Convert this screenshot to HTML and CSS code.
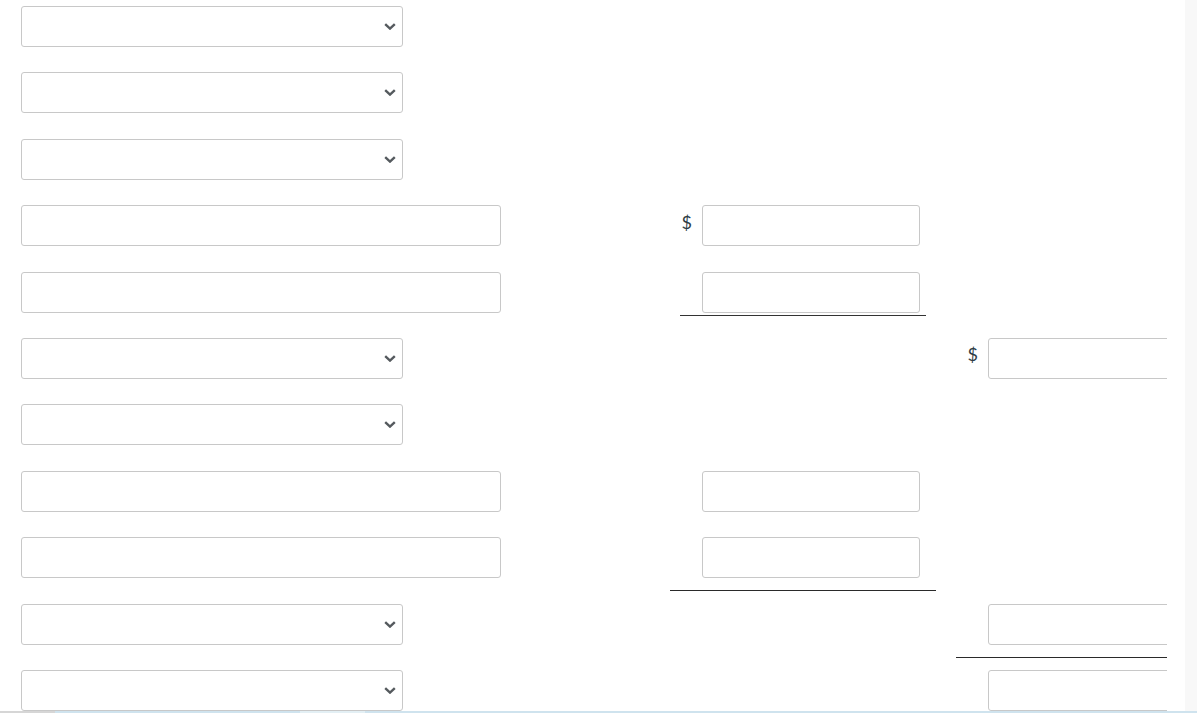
FILE: index.html
```html
<!DOCTYPE html>
<html lang="en">
<head>
<meta charset="utf-8">
<title>Worksheet</title>
<link rel="stylesheet" href="styles.css">
</head>
<body>
<main class="sheet">
  <div class="row">
    <label class="select"><select></select><svg class="chev" viewBox="0 0 12 7" width="12" height="7"><polyline points="1.2,1.2 6,5.6 10.8,1.2"/></svg></label>
  </div>
  <div class="row">
    <label class="select"><select></select><svg class="chev" viewBox="0 0 12 7" width="12" height="7"><polyline points="1.2,1.2 6,5.6 10.8,1.2"/></svg></label>
  </div>
  <div class="row">
    <label class="select"><select></select><svg class="chev" viewBox="0 0 12 7" width="12" height="7"><polyline points="1.2,1.2 6,5.6 10.8,1.2"/></svg></label>
  </div>
  <div class="row">
    <input class="text wide" type="text">
    <div class="cell-b"><span class="cur">$</span><input class="text amt" type="text"></div>
  </div>
  <div class="row">
    <input class="text wide" type="text">
    <div class="cell-b sub"><input class="text amt" type="text"></div>
  </div>
  <div class="row">
    <label class="select"><select></select><svg class="chev" viewBox="0 0 12 7" width="12" height="7"><polyline points="1.2,1.2 6,5.6 10.8,1.2"/></svg></label>
    <div class="cell-b"></div>
    <div class="cell-c"><span class="cur">$</span><input class="text amt" type="text"></div>
  </div>
  <div class="row">
    <label class="select"><select></select><svg class="chev" viewBox="0 0 12 7" width="12" height="7"><polyline points="1.2,1.2 6,5.6 10.8,1.2"/></svg></label>
  </div>
  <div class="row">
    <input class="text wide" type="text">
    <div class="cell-b"><input class="text amt" type="text"></div>
  </div>
  <div class="row">
    <input class="text wide" type="text">
    <div class="cell-b total"><input class="text amt" type="text"></div>
  </div>
  <div class="row">
    <label class="select"><select></select><svg class="chev" viewBox="0 0 12 7" width="12" height="7"><polyline points="1.2,1.2 6,5.6 10.8,1.2"/></svg></label>
    <div class="cell-b"></div>
    <div class="cell-c total"><input class="text amt" type="text"></div>
  </div>
  <div class="row">
    <label class="select"><select></select><svg class="chev" viewBox="0 0 12 7" width="12" height="7"><polyline points="1.2,1.2 6,5.6 10.8,1.2"/></svg></label>
    <div class="cell-b"></div>
    <div class="cell-c"><input class="text amt" type="text"></div>
  </div>
</main>
<div class="scroll-track"></div>
<div class="footer-edge"></div>
</body>
</html>
```
FILE: styles.css
```css
html, body {
  margin: 0;
  padding: 0;
  background: #ffffff;
  overflow: hidden;
  height: 100%;
}

body {
  font-family: Lato, "Liberation Sans", sans-serif;
  color: #2d3b45;
}

.sheet {
  padding: 6px 0 0 21px;
  width: 1146px;
}

.row {
  display: grid;
  grid-template-columns: 480px 169px 266px 20px 211px;
  grid-template-rows: 41px;
  margin-bottom: 25.4px;
}

.select {
  grid-column: 1;
  width: 382px;
  height: 41px;
  box-sizing: border-box;
  border: 1px solid #c8c8c8;
  border-radius: 3px;
  background: #fff;
  display: flex;
  align-items: center;
  padding-right: 6px;
}

.select select {
  flex: 1;
  height: 100%;
  border: 0;
  background: transparent;
  appearance: none;
  -webkit-appearance: none;
  outline: none;
  font: inherit;
}

.chev {
  display: block;
  fill: none;
  stroke: #555a5e;
  stroke-width: 2.4;
  stroke-linecap: butt;
  stroke-linejoin: miter;
}

.text {
  display: block;
  box-sizing: border-box;
  height: 41px;
  border: 1px solid #c8c8c8;
  border-radius: 3px;
  background: #fff;
  margin: 0;
  padding: 0 8px;
  font: inherit;
  outline: none;
}

.wide {
  grid-column: 1;
  width: 480px;
}

.cell-b {
  grid-column: 3;
  display: flex;
  align-items: center;
  padding-left: 32px;
  align-self: start;
  height: 41px;
}

.cell-c {
  grid-column: 5;
  display: flex;
  align-items: center;
  padding-left: 32px;
  overflow: hidden;
  align-self: start;
  height: 41px;
}

.amt {
  width: 218px;
  flex: none;
}

.cur {
  flex: none;
  width: 32px;
  margin-left: -32px;
  padding-right: 10px;
  box-sizing: border-box;
  text-align: right;
  font-size: 18px;
  line-height: 1;
  margin-top: -8px;
}

.cell-b.sub {
  height: auto;
  margin: 0 10px;
  padding-left: 22px;
  padding-bottom: 2px;
  border-bottom: 1px solid #333;
}

.total {
  height: auto;
  padding-bottom: 12px;
  border-bottom: 1px solid #2a2a2a;
}

.scroll-track {
  position: fixed;
  top: 0;
  right: 0;
  width: 12px;
  height: 100%;
  background: #f8f8f8;
}

.footer-edge {
  position: fixed;
  left: 0;
  right: 0;
  bottom: 0;
  height: 2px;
  background: linear-gradient(to right, #d6d6d6 0 55px, #cfe3ee 55px 300px, #e3eff4 300px 365px, #cfe3ee 365px);
}
```
